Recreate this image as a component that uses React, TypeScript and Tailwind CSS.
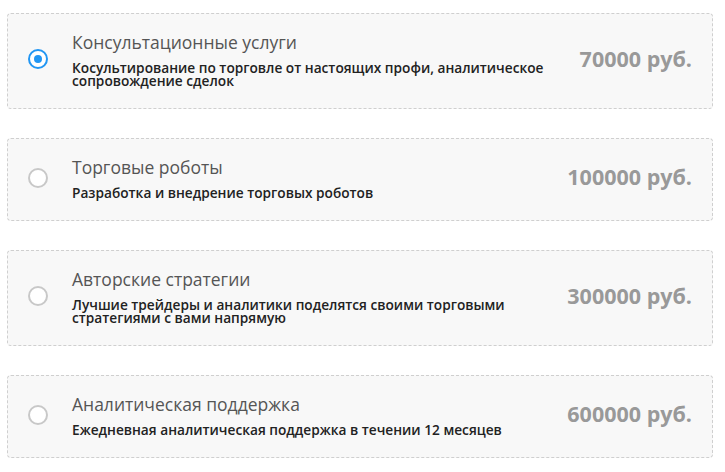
import React from "react";

const items = [
  {
    title: "Консультационные услуги",
    desc: "Косультирование по торговле от настоящих профи, аналитическое сопровождение сделок",
    price: "70000 руб.",
    checked: true,
  },
  {
    title: "Торговые роботы",
    desc: "Разработка и внедрение торговых роботов",
    price: "100000 руб.",
    checked: false,
  },
  {
    title: "Авторские стратегии",
    desc: "Лучшие трейдеры и аналитики поделятся своими торговыми стратегиями с вами напрямую",
    price: "300000 руб.",
    checked: false,
  },
  {
    title: "Аналитическая поддержка",
    desc: "Ежедневная аналитическая поддержка в течении 12 месяцев",
    price: "600000 руб.",
    checked: false,
  },
];

export default function App() {
  return (
    <div
      className="min-h-screen bg-white pt-[13px] pl-[7px]"
      style={{ fontFamily: '"Open Sans", "Noto Sans", sans-serif' }}
    >
      <div className="flex w-[706px] flex-col gap-[29px]">
        {items.map((it) => (
          <div
            key={it.title}
            className="flex items-center rounded-[4px] border border-dashed border-[#cfcfcf] bg-[#f8f8f8] pt-[17px] pb-[21px] pl-[20px] pr-[20px]"
          >
            <div className="flex w-[44px] shrink-0 items-center">
              {it.checked ? (
                <div className="flex h-[20px] w-[20px] items-center justify-center rounded-full border-2 border-[#2196f3] bg-white">
                  <div className="h-[8px] w-[8px] rounded-full bg-[#2196f3]" />
                </div>
              ) : (
                <div className="h-[20px] w-[20px] rounded-full border-2 border-[#c8c8c8] bg-white" />
              )}
            </div>
            <div className="flex min-w-0 flex-1 flex-col gap-[8px]">
              <div className="text-[17.5px] leading-[22px] text-[#555]">{it.title}</div>
              <div className="w-[490px] text-[13.7px] font-semibold leading-[13px] text-[#222]">
                {it.desc}
              </div>
            </div>
            <div className="text-[21.5px] font-bold text-[#999]">{it.price}</div>
          </div>
        ))}
      </div>
    </div>
  );
}
